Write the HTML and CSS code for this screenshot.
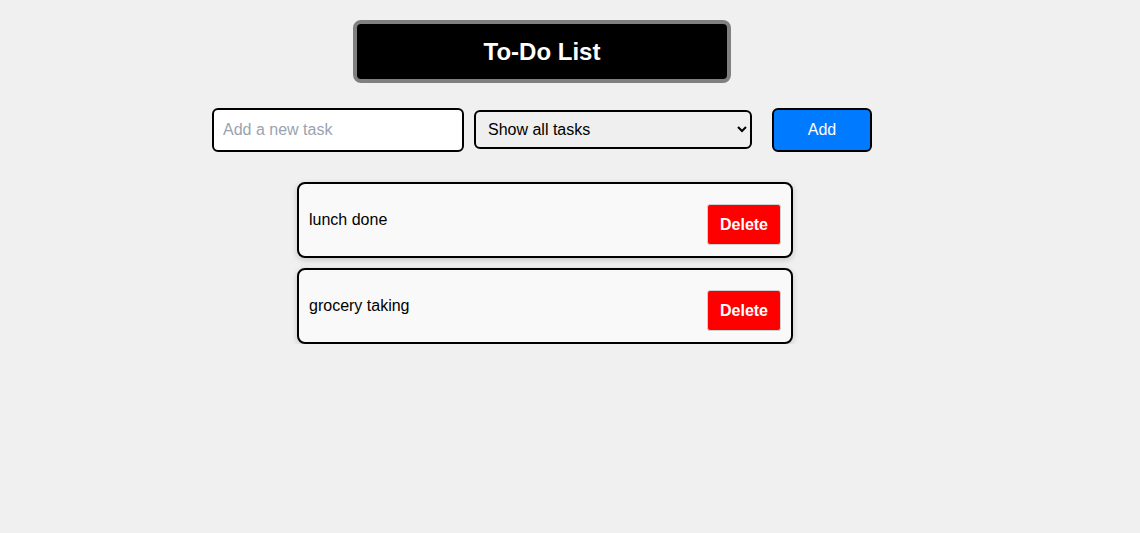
FILE: index.html
```html
<!DOCTYPE html>
<html>
<head>
<meta charset="utf-8">
<link rel="stylesheet" href="styles.css">
</head>
<body>
<div class="app">
  <h1 class="title">To-Do List</h1>
  <div class="controls">
    <input class="task-input" type="text" placeholder="Add a new task">
    <select class="filter">
      <option>Show all tasks</option>
    </select>
    <button class="add-btn">Add</button>
  </div>
  <ul class="tasks">
    <li class="task"><span class="task-text">lunch done</span><button class="del-btn">Delete</button></li>
    <li class="task"><span class="task-text">grocery taking</span><button class="del-btn">Delete</button></li>
  </ul>
</div>
</body>
</html>
```

FILE: styles.css
```css
html, body {
  margin: 0;
  padding: 0;
  background: #f0f0f0;
  font-family: "Liberation Sans", Arial, sans-serif;
}
.app {
  width: 1140px;
  padding-right: 56px;
  box-sizing: border-box;
  display: flex;
  flex-direction: column;
  align-items: center;
  padding-top: 20px;
}
.title {
  margin: 0;
  box-sizing: border-box;
  width: 378px;
  height: 63px;
  background: #000;
  border: 4px solid #808080;
  border-radius: 8px;
  color: #fff;
  font-size: 24px;
  font-weight: bold;
  display: flex;
  align-items: center;
  justify-content: center;
}
.controls {
  margin-top: 25px;
  display: flex;
  align-items: center;
}
.task-input {
  box-sizing: border-box;
  width: 252px;
  height: 44px;
  border: 2px solid #000;
  border-radius: 6px;
  padding: 0 9px;
  font-size: 16px;
  font-family: "Liberation Sans", Arial, sans-serif;
  background: #fff;
  outline: none;
}
.task-input::placeholder {
  color: #9aa3b0;
}
.filter {
  box-sizing: border-box;
  width: 278px;
  height: 39px;
  margin-left: 10px;
  margin-bottom: 2px;
  border: 2px solid #000;
  border-radius: 6px;
  padding: 0 8px;
  font-size: 16px;
  font-family: "Liberation Sans", Arial, sans-serif;
  background: #efefef;
  color: #000;
}
.add-btn {
  box-sizing: border-box;
  width: 100px;
  height: 44px;
  margin-left: 20px;
  background: #007bff;
  color: #fff;
  border: 2px solid #000;
  border-radius: 6px;
  font-size: 16px;
  font-family: "Liberation Sans", Arial, sans-serif;
}
.tasks {
  list-style: none;
  margin: 30px 0 0 6px;
  padding: 0;
  width: 496px;
  display: flex;
  flex-direction: column;
  gap: 10px;
}
.task {
  box-sizing: border-box;
  height: 76px;
  background: #f9f9f9;
  border: 2px solid #000;
  border-radius: 8px;
  padding: 0 10px;
  display: flex;
  align-items: center;
  justify-content: space-between;
  box-shadow: 0 2px 6px rgba(0,0,0,0.18);
}
.task-text {
  font-size: 16px;
  color: #000;
}
.del-btn {
  box-sizing: border-box;
  width: 74px;
  height: 41px;
  margin-top: 9px;
  background: #ff0000;
  color: #fff;
  border: 1px solid #d0d0d0;
  border-radius: 3px;
  font-size: 16px;
  font-weight: bold;
  font-family: "Liberation Sans", Arial, sans-serif;
}
```
